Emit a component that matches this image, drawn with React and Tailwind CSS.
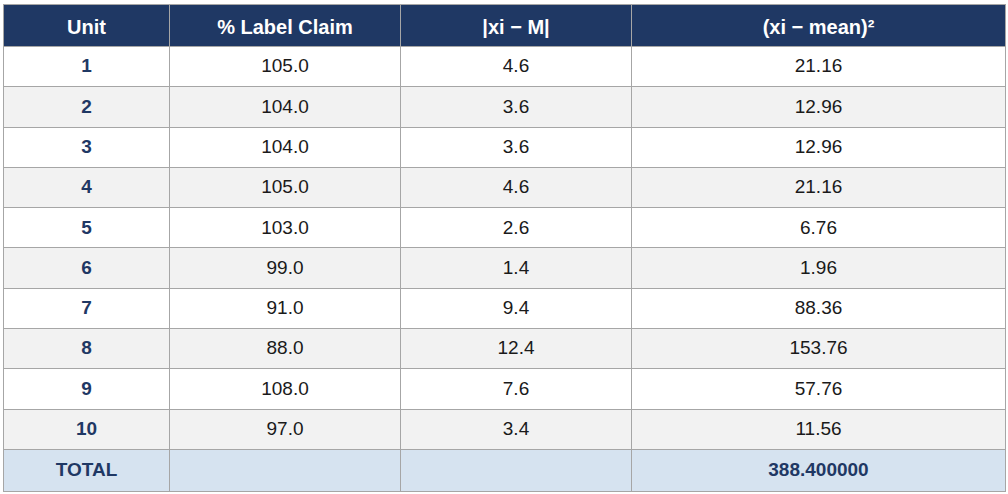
import React from 'react';

const ROWS = [
  ['1', '105.0', '4.6', '21.16'],
  ['2', '104.0', '3.6', '12.96'],
  ['3', '104.0', '3.6', '12.96'],
  ['4', '105.0', '4.6', '21.16'],
  ['5', '103.0', '2.6', '6.76'],
  ['6', '99.0', '1.4', '1.96'],
  ['7', '91.0', '9.4', '88.36'],
  ['8', '88.0', '12.4', '153.76'],
  ['9', '108.0', '7.6', '57.76'],
  ['10', '97.0', '3.4', '11.56'],
];

const HEADERS = ['Unit', '% Label Claim', '|xi \u2212 M|', '(xi \u2212 mean)\u00b2'];

export default function App() {
  return (
    <div className="pt-[4px] pl-[3px] bg-white" style={{ fontFamily: '"Liberation Sans", Arial, sans-serif' }}>
      <table className="w-[1002px] border-collapse text-[19px] text-center table-fixed">
        <colgroup>
          <col className="w-[166px]" />
          <col className="w-[231px]" />
          <col className="w-[231px]" />
          <col className="w-[374px]" />
        </colgroup>
        <thead>
          <tr className="bg-[#1f3864] h-[42px]">
            {HEADERS.map((h) => (
              <th key={h} className="border border-[#a6a6a6] text-white font-bold text-[20px] pt-[2px]">
                {h}
              </th>
            ))}
          </tr>
        </thead>
        <tbody>
          {ROWS.map((r, idx) => (
            <tr key={r[0]} className={idx % 2 === 1 ? 'bg-[#f2f2f2] h-[40.3px]' : 'bg-white h-[40.3px]'}>
              <td className="border border-[#a6a6a6] font-bold text-[#1f3864]">{r[0]}</td>
              <td className="border border-[#a6a6a6] text-[#1a1a1a]">{r[1]}</td>
              <td className="border border-[#a6a6a6] text-[#1a1a1a]">{r[2]}</td>
              <td className="border border-[#a6a6a6] text-[#1a1a1a]">{r[3]}</td>
            </tr>
          ))}
          <tr className="bg-[#d6e3f0] h-[42px]">
            <td className="border border-[#a6a6a6] font-bold text-[#1f3864]">TOTAL</td>
            <td className="border border-[#a6a6a6]"></td>
            <td className="border border-[#a6a6a6]"></td>
            <td className="border border-[#a6a6a6] font-bold text-[#1f3864]">388.400000</td>
          </tr>
        </tbody>
      </table>
    </div>
  );
}
